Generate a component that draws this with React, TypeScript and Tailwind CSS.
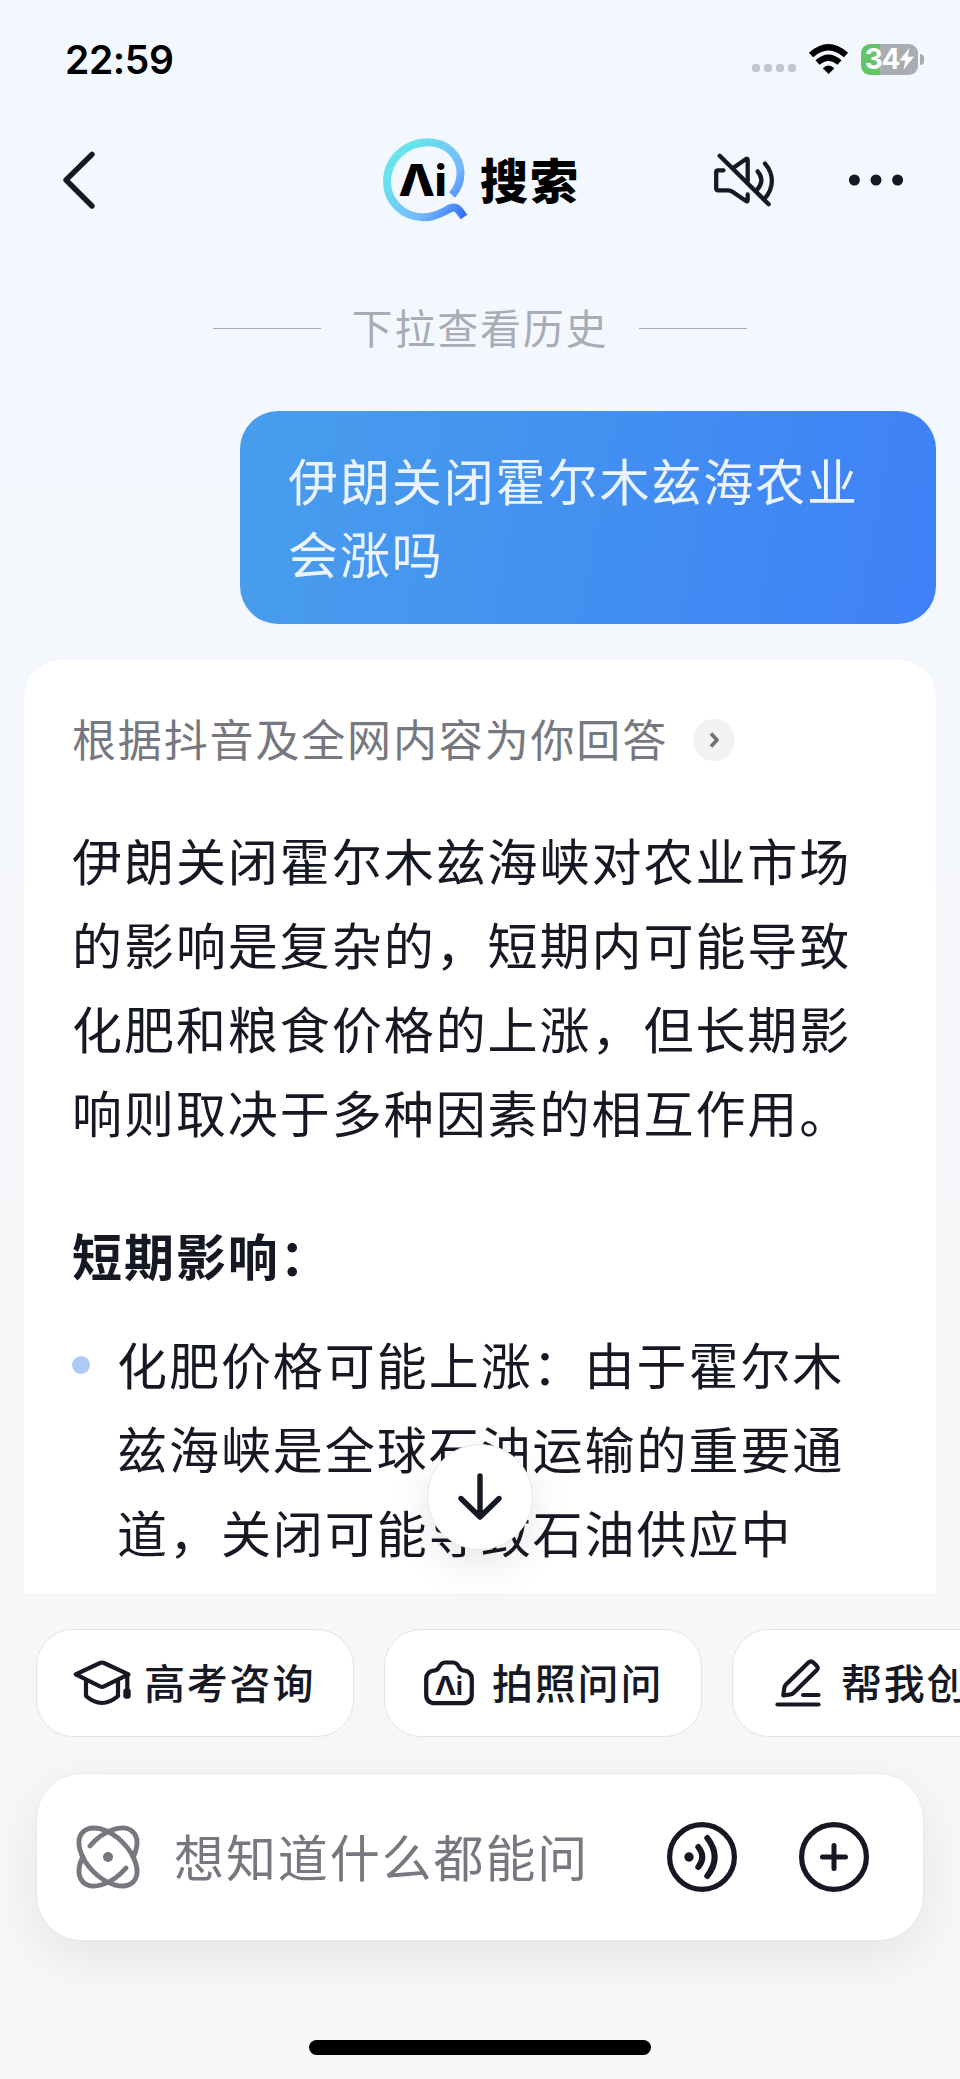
import React from 'react';

const answerLines = [
  '伊朗关闭霍尔木兹海峡对农业市场',
  '的影响是复杂的，短期内可能导致',
  '化肥和粮食价格的上涨，但长期影',
  '响则取决于多种因素的相互作用。'
];

const bulletLines = [
  '化肥价格可能上涨：由于霍尔木',
  '兹海峡是全球石油运输的重要通',
  '道，关闭可能导致石油供应中'
];

const StatusBar = () => (
  <div className="flex h-[118px] shrink-0 items-center justify-between pl-[65px] pr-[36px]">
    <span className="font-['Inter'] text-[39px] font-semibold leading-none tracking-[-0.4px] text-black">
      22:59
    </span>
    <div className="flex items-center">
      <div className="mt-[18px] flex gap-1">
        {[0, 1, 2, 3].map((i) => (
          <span key={i} className="size-2 rounded-[3px] bg-[#c3c7cd]" />
        ))}
      </div>
      <svg className="ml-[12px]" width="41" height="32" viewBox="808 42 41 32">
        <path d="M811 54 Q828.5 38.5 846 54" fill="none" stroke="#000" strokeWidth="6.2" />
        <path d="M817.5 61.5 Q828.5 52 839.5 61.5" fill="none" stroke="#000" strokeWidth="6.2" />
        <path d="M822.8 67.3 Q828.5 61.5 834.4 67.3 L828.6 73 Z" />
      </svg>
      <div className="ml-[12px] flex items-center">
        <div className="flex h-[31px] w-[57px] items-center justify-center rounded-[9px] bg-[linear-gradient(90deg,#65c466_19px,#a9acb2_19px)]">
          <span className="font-['Inter'] text-[28px] font-bold leading-none tracking-[-1.2px] text-white">
            34
          </span>
          <svg width="15" height="22" viewBox="0 0 15 22">
            <path d="M10.5 0 L0.3 12.5 H6.3 L4.5 21.8 L15 8.8 H8.6 Z" fill="#fff" />
          </svg>
        </div>
        <span className="ml-[2px] h-[11px] w-[4px] rounded-r-full bg-[#a9acb2]" />
      </div>
    </div>
  </div>
);

const NavBar = () => (
  <div className="flex h-[124px] shrink-0 items-center pl-[60px] pr-[54px]">
    <svg width="40" height="60" viewBox="60 150 40 60">
      <path
        d="M92 154.3 L66 180 L92 206"
        fill="none"
        stroke="#161823"
        strokeWidth="5.4"
        strokeLinecap="round"
        strokeLinejoin="round"
      />
    </svg>
    <div className="ml-[280px] flex items-center">
      <svg width="92" height="92" viewBox="380 134 92 92">
        <defs>
          <linearGradient id="ring" gradientUnits="userSpaceOnUse" x1="392" y1="158" x2="466" y2="218">
            <stop offset="0.1" stopColor="#68e3ec" />
            <stop offset="0.62" stopColor="#76b8fb" />
            <stop offset="1" stopColor="#2a68f6" />
          </linearGradient>
        </defs>
        <path
          d="M452 195 C457.5 189 460.5 182 460.5 173 C460.5 156 447 142.3 428 142.3 C405 142.3 387 160 387 182 C387 201 403 217.3 423 217.3 C437 217.3 444 211 451 208 C456 206 458.5 209 464 217"
          fill="none"
          stroke="url(#ring)"
          strokeWidth="8"
        />
        <text x="398.5" y="195.7" fontFamily="Inter" fontWeight="800" fontSize="43.5" textLength="36.5" lengthAdjust="spacingAndGlyphs">
          Λ
        </text>
        <text x="434.8" y="195.7" fontFamily="Inter" fontWeight="800" fontSize="42">
          i
        </text>
      </svg>
      <h1 className="ml-[8px] pb-[5px] text-[48px] font-black leading-none tracking-[2px] text-black">
        搜索
      </h1>
    </div>
    <svg className="ml-auto" width="66" height="60" viewBox="710 150 66 60">
      <g fill="none" stroke="#161823" strokeWidth="4.3" strokeLinecap="round" strokeLinejoin="round">
        <path d="M719.7 155.7 L768.7 204.3" />
        <path d="M723.5 170.3 H718 Q716.2 170.3 716.2 172 V188.3 Q716.2 190.3 718 190.3 H728 Q730.5 190.3 732.5 191.7 L746 201 Q747.7 202 747.7 199.8 V194.5" />
        <path d="M733.5 167.7 L746 159 Q747.7 158 747.7 160 V181" />
        <path d="M757.6 171.3 Q765.5 180.5 756.8 190" />
        <path d="M765 163.6 C774 174 774.5 187.5 764.3 199" />
      </g>
    </svg>
    <svg className="ml-[72px]" width="58" height="20" viewBox="848 170 58 20">
      <circle cx="854.4" cy="180" r="5.5" fill="#161823" />
      <circle cx="876" cy="180" r="5.5" fill="#161823" />
      <circle cx="897.6" cy="180" r="5.5" fill="#161823" />
    </svg>
  </div>
);

const CapIcon = () => (
  <svg width="60" height="50" viewBox="72 1658 60 50">
    <g fill="none" stroke="#161823" strokeWidth="4.2" strokeLinejoin="round" strokeLinecap="round">
      <path d="M100 1663 Q102 1662 104 1663 L128.5 1674.3 L104 1686.3 Q102 1687.3 100 1686.3 L75.7 1674.3 Z" />
      <path d="M86 1681.5 V1696 Q94 1703 102 1703 Q110 1703 118 1696 V1681.5" />
      <path d="M127.3 1676 V1692" />
    </g>
    <rect x="123.3" y="1688.5" width="7.4" height="10.2" rx="3" fill="#161823" />
  </svg>
);

const CameraIcon = () => (
  <svg width="54" height="50" viewBox="423 1658 54 50">
    <path
      d="M436 1670.3 Q438.5 1670 439.8 1667.5 Q442.3 1662.5 446 1662.5 H454 Q457.8 1662.5 460.3 1667.5 Q461.5 1670 464 1670.3 Q472.8 1671 472.8 1679 V1694.5 Q472.8 1703.2 464 1703.2 H436 Q427.2 1703.2 427.2 1694.5 V1679 Q427.2 1671 436 1670.3 Z"
      fill="none"
      stroke="#161823"
      strokeWidth="4.2"
    />
    <text x="435.8" y="1695" fontFamily="Inter" fontWeight="700" fontSize="25.5" fill="#161823" textLength="21.5" lengthAdjust="spacingAndGlyphs">
      Λ
    </text>
    <text x="457" y="1695" fontFamily="Inter" fontWeight="700" fontSize="25" fill="#161823">
      i
    </text>
  </svg>
);

const PenIcon = () => (
  <svg width="50" height="50" viewBox="773 1658 50 50">
    <g fill="none" stroke="#161823" strokeWidth="4.2" strokeLinecap="round" strokeLinejoin="round">
      <path d="M777.5 1704.5 H818.5" />
      <path d="M803 1695 H818.5" />
      <path d="M783.3 1695.5 L784.3 1688 Q784.6 1686 786 1684.6 L808.7 1662.3 Q811 1660.3 813.3 1662.5 L816.7 1665.8 Q818.7 1668 816.6 1670.2 L794 1692.4 Q792.4 1694 790.4 1694.4 Z" />
    </g>
  </svg>
);

const chips = [
  { label: '高考咨询', icon: <CapIcon />, style: 'gap-[12px] pl-[35px]' },
  { label: '拍照问问', icon: <CameraIcon />, style: 'gap-[16px] pl-[37px]' },
  { label: '帮我创作', icon: <PenIcon />, style: 'gap-[18px] pl-[40px]' }
];

const InputBar = () => (
  <div className="mx-[36px] mt-[36px] flex h-[168px] shrink-0 items-center rounded-[46px] border border-[#e9e9ea] bg-white pl-[39px] pr-[54px] shadow-[0_16px_50px_rgba(0,0,0,0.075)]">
    <svg width="64" height="64" viewBox="76 1825 64 64">
      <g fill="none" stroke="#77787f" strokeWidth="4.9" strokeLinecap="round">
        <ellipse cx="108" cy="1857" rx="35.4" ry="20.7" transform="rotate(45 108 1857)" />
        <path d="M90 1846 A35.4 20.7 -45 0 1 133.03 1831.97 A35.4 20.7 -45 0 1 133.2 1857.2" />
        <path d="M126 1868 A35.4 20.7 -45 0 1 82.97 1882.03 A35.4 20.7 -45 0 1 82.8 1856.8" />
      </g>
      <circle cx="108" cy="1857" r="5" fill="#77787f" />
    </svg>
    <span className="ml-[34px] pb-[5px] text-[50px] leading-none tracking-[1.9px] text-[#77787f]">
      想知道什么都能问
    </span>
    <svg className="ml-auto" width="70" height="70" viewBox="667 1822 70 70">
      <circle cx="702" cy="1857" r="32.4" fill="none" stroke="#161823" strokeWidth="5.2" />
      <circle cx="689" cy="1857" r="4.7" fill="#161823" />
      <g fill="none" stroke="#161823" strokeWidth="6" strokeLinecap="round">
        <path d="M698.3 1847 Q706.3 1857 698.3 1867" />
        <path d="M707.3 1838 Q722 1857 707.3 1876" />
      </g>
    </svg>
    <svg className="ml-[62px]" width="70" height="70" viewBox="799 1822 70 70">
      <circle cx="834" cy="1857" r="32.4" fill="none" stroke="#161823" strokeWidth="5.2" />
      <path d="M822.5 1857 H845.5 M834 1845.5 V1868.5" stroke="#161823" strokeWidth="5" strokeLinecap="round" />
    </svg>
  </div>
);

export default function App() {
  return (
    <main
      lang="zh-CN"
      className="flex h-[2079px] w-[960px] flex-col overflow-hidden bg-[linear-gradient(180deg,#f3f8ff_0px,#f3f8ff_260px,#f4f7fc_700px,#f6f7fb_1100px,#f7f7f7_1400px)] font-['Noto_Sans_CJK_SC',sans-serif] text-[#161823]"
    >
      <StatusBar />
      <NavBar />

      {/* Pull-down hint */}
      <div className="mt-[56px] flex h-[60px] shrink-0 items-center justify-center">
        <span className="h-px w-[108px] bg-[#a9acb4]" />
        <span className="ml-[31px] mr-[31px] pb-[5px] text-[41px] leading-[60px] tracking-[1.8px] text-[#a9acb4]">
          下拉查看历史
        </span>
        <span className="h-px w-[108px] bg-[#a9acb4]" />
      </div>

      {/* User question */}
      <div className="mr-[24px] mt-[53px] h-[213px] w-[696px] shrink-0 self-end rounded-[38px] bg-[linear-gradient(100deg,#489eec,#4390f1_50%,#3f80f7)] pl-[48px] pt-[32px] text-[50px] leading-[73px] tracking-[1.9px] text-[#eaf3fe]">
        伊朗关闭霍尔木兹海农业
        <br />
        会涨吗
      </div>

      {/* Answer card */}
      <section className="mx-[24px] mt-[36px] h-[933px] shrink-0 rounded-t-[38px] bg-white px-[48px] pt-[50px]">
        <div className="flex h-[60px] items-center">
          <span className="pb-[5px] text-[44px] leading-[60px] tracking-[1.85px] text-[#77787f]">
            根据抖音及全网内容为你回答
          </span>
          <span className="ml-[25px] flex size-[42px] items-center justify-center rounded-full bg-[#f2f2f3]">
            <svg width="12" height="18" viewBox="0 0 12 18">
              <path
                d="M3 2.5 L9 9 L3 15.5"
                fill="none"
                stroke="#6f7077"
                strokeWidth="3.6"
                strokeLinejoin="round"
              />
            </svg>
          </span>
        </div>
        <p className="mt-[47px] whitespace-nowrap text-[50px] leading-[84px] tracking-[1.95px]">
          {answerLines.map((line) => (
            <span key={line} className="block">
              {line}
            </span>
          ))}
        </p>
        <h2 className="mt-[59px] text-[50px] font-bold leading-[84px] tracking-[1.95px]">
          短期影响：
        </h2>
        <div className="relative mt-[25px] flex">
          <span className="mt-[35px] size-[18px] shrink-0 rounded-full bg-[#adcaf7]" />
          <p className="ml-[27px] whitespace-nowrap text-[50px] leading-[84px] tracking-[1.95px]">
            {bulletLines.map((line) => (
              <span key={line} className="block">
                {line}
              </span>
            ))}
          </p>
          <button className="absolute left-[355px] top-[123px] flex size-[106px] items-center justify-center rounded-full border border-[#e8e8e9] bg-white shadow-[0_14px_44px_rgba(0,0,0,0.1)]">
            <svg width="50" height="52" viewBox="455 1471 50 52">
              <path
                d="M480 1476 V1516.5 M461 1498.5 L480 1517 L499 1498.5"
                fill="none"
                stroke="#161823"
                strokeWidth="5.4"
                strokeLinecap="round"
                strokeLinejoin="round"
              />
            </svg>
          </button>
        </div>
      </section>

      {/* Shortcuts */}
      <div className="ml-[36px] mt-[36px] flex shrink-0 gap-[30.5px]">
        {chips.map((chip) => (
          <div
            key={chip.label}
            className={`flex h-[108px] w-[317.5px] shrink-0 items-center rounded-[37px] border border-[#e3e3e5] bg-white ${chip.style}`}
          >
            {chip.icon}
            <span className="whitespace-nowrap pb-[4px] text-[41px] font-medium leading-none tracking-[1.8px]">
              {chip.label}
            </span>
          </div>
        ))}
      </div>

      <InputBar />

      {/* Home indicator */}
      <div className="mx-auto mt-[99px] h-[15px] w-[342px] shrink-0 rounded-full bg-black" />
    </main>
  );
}
